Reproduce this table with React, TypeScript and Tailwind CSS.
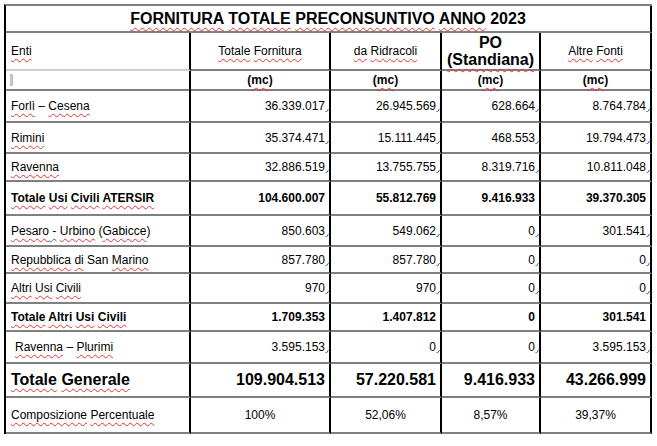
import type { ReactNode } from "react";

// red spell-check squiggle under a word
const Sp = ({ children }: { children: ReactNode }) => (
  <span className="underline decoration-wavy decoration-[#e8312f] decoration-1 underline-offset-[3px]">
    {children}
  </span>
);

// small blue grammar hook after a number
const Mark = () => (
  <svg className="inline-block w-[4px] h-[5px] -mr-[4px] align-[-3px]" viewBox="0 0 4 5">
    <path d="M0.5 3.5 Q1.5 5 3.5 1" fill="none" stroke="#2f5fd0" strokeWidth="1" />
  </svg>
);

type Row = {
  label: ReactNode;
  vals: string[];
  kind: "normal" | "bold" | "big" | "pct";
  h: string;
};

const rows: Row[] = [
  {
    label: (
      <>
        <Sp>Forlì</Sp> – <Sp>Cesena</Sp>
      </>
    ),
    vals: ["36.339.017", "26.945.569", "628.664", "8.764.784"],
    kind: "normal",
    h: "h-[33px]",
  },
  {
    label: <Sp>Rimini</Sp>,
    vals: ["35.374.471", "15.111.445", "468.553", "19.794.473"],
    kind: "normal",
    h: "h-[31px]",
  },
  {
    label: <Sp>Ravenna</Sp>,
    vals: ["32.886.519", "13.755.755", "8.319.716", "10.811.048"],
    kind: "normal",
    h: "h-[28px]",
  },
  {
    label: (
      <>
        <Sp>Totale</Sp> <Sp>Usi</Sp> <Sp>Civili</Sp> <Sp>ATERSIR</Sp>
      </>
    ),
    vals: ["104.600.007", "55.812.769", "9.416.933", "39.370.305"],
    kind: "bold",
    h: "h-[34px]",
  },
  {
    label: (
      <>
        <Sp>Pesaro</Sp>
        <span className="underline decoration-wavy decoration-[#2f5fd0] decoration-1 underline-offset-[3px]"> -</span>{" "}
        <Sp>Urbino</Sp> (<Sp>Gabicce</Sp>)
      </>
    ),
    vals: ["850.603", "549.062", "0", "301.541"],
    kind: "normal",
    h: "h-[31px]",
  },
  {
    label: (
      <>
        <Sp>Repubblica</Sp> <Sp>di</Sp> San <Sp>Marino</Sp>
      </>
    ),
    vals: ["857.780", "857.780", "0", "0"],
    kind: "normal",
    h: "h-[27px]",
  },
  {
    label: (
      <>
        <Sp>Altri</Sp> <Sp>Usi</Sp> <Sp>Civili</Sp>
      </>
    ),
    vals: ["970", "970", "0", "0"],
    kind: "normal",
    h: "h-[30px]",
  },
  {
    label: (
      <>
        <Sp>Totale</Sp> <Sp>Altri</Sp> <Sp>Usi</Sp> <Sp>Civili</Sp>
      </>
    ),
    vals: ["1.709.353", "1.407.812", "0", "301.541"],
    kind: "bold",
    h: "h-[28px]",
  },
  {
    label: (
      <span className="pl-[4px]">
        <Sp>Ravenna</Sp> – <Sp>Plurimi</Sp>
      </span>
    ),
    vals: ["3.595.153", "0", "0", "3.595.153"],
    kind: "normal",
    h: "h-[32px]",
  },
  {
    label: (
      <>
        <Sp>Totale</Sp> <Sp>Generale</Sp>
      </>
    ),
    vals: ["109.904.513", "57.220.581", "9.416.933", "43.266.999"],
    kind: "big",
    h: "h-[34px]",
  },
  {
    label: (
      <>
        <Sp>Composizione</Sp> <Sp>Percentuale</Sp>
      </>
    ),
    vals: ["100%", "52,06%", "8,57%", "39,37%"],
    kind: "pct",
    h: "h-[36px]",
  },
];

const grid = "grid grid-cols-[185px_140px_111px_99px_111px]";
const cell = "flex items-center border-r-2 border-b-2 border-r-black border-b-[#808080]";

const textFor = (kind: Row["kind"]) =>
  kind === "big" ? "text-[16px] font-bold" : kind === "bold" ? "text-[12px] font-bold" : "text-[12px]";

export default function App() {
  return (
    <div className="w-[657px] h-[446px] bg-white pl-[4px] pt-[4px] text-black font-['Liberation_Sans',Arial,sans-serif]">
      <div className="w-[648px] border-l-2 border-t-2 border-l-black border-t-[#808080]">
        {/* title */}
        <div className="h-[27px] flex items-center justify-center border-r-2 border-b-2 border-r-black border-b-[#808080] text-[16px] font-bold">
          <span>
            <Sp>FORNITURA</Sp> <Sp>TOTALE</Sp> <Sp>PRECONSUNTIVO</Sp> <Sp>ANNO</Sp> 2023
          </span>
        </div>

        {/* header */}
        <div className={`${grid} h-[38px] text-[12px]`}>
          <div className="flex items-center pl-[5px] border-r-2 border-b-2 border-r-black border-b-[#cfcfcf]">
            <Sp>Enti</Sp>
          </div>
          <div className={`${cell} justify-center`}>
            <span>
              <Sp>Totale</Sp> <Sp>Fornitura</Sp>
            </span>
          </div>
          <div className={`${cell} justify-center`}>
            <span>
              <Sp>da</Sp> <Sp>Ridracoli</Sp>
            </span>
          </div>
          <div className={`${cell} justify-center text-center text-[16px] font-bold leading-[17px]`}>
            <span>
              PO
              <br />
              <Sp>(Standiana)</Sp>
            </span>
          </div>
          <div className={`${cell} justify-center`}>
            <span>
              <Sp>Altre</Sp> <Sp>Fonti</Sp>
            </span>
          </div>
        </div>

        {/* units */}
        <div className={`${grid} h-[19px] text-[12px] font-bold`}>
          <div className={`${cell} pl-[4px]`}>
            <div className="w-[3px] h-[12px] bg-[#c4c4c4]" />
          </div>
          {[0, 1, 2, 3].map((i) => (
            <div key={i} className={`${cell} justify-center`}>
              <span>
                (<Sp>mc</Sp>)
              </span>
            </div>
          ))}
        </div>

        {rows.map((r, ri) => (
          <div key={ri} className={`${grid} ${r.h}`}>
            <div className={`${cell} pl-[5px] whitespace-nowrap ${textFor(r.kind)}`}>
              <span>{r.label}</span>
            </div>
            {r.vals.map((v, vi) =>
              r.kind === "pct" ? (
                <div key={vi} className={`${cell} justify-center text-[12px]`}>
                  {v}
                </div>
              ) : (
                <div key={vi} className={`${cell} justify-end pr-[4px] ${textFor(r.kind)}`}>
                  <span>
                    {v}
                    {r.kind === "normal" && <Mark />}
                  </span>
                </div>
              )
            )}
          </div>
        ))}
      </div>
    </div>
  );
}
